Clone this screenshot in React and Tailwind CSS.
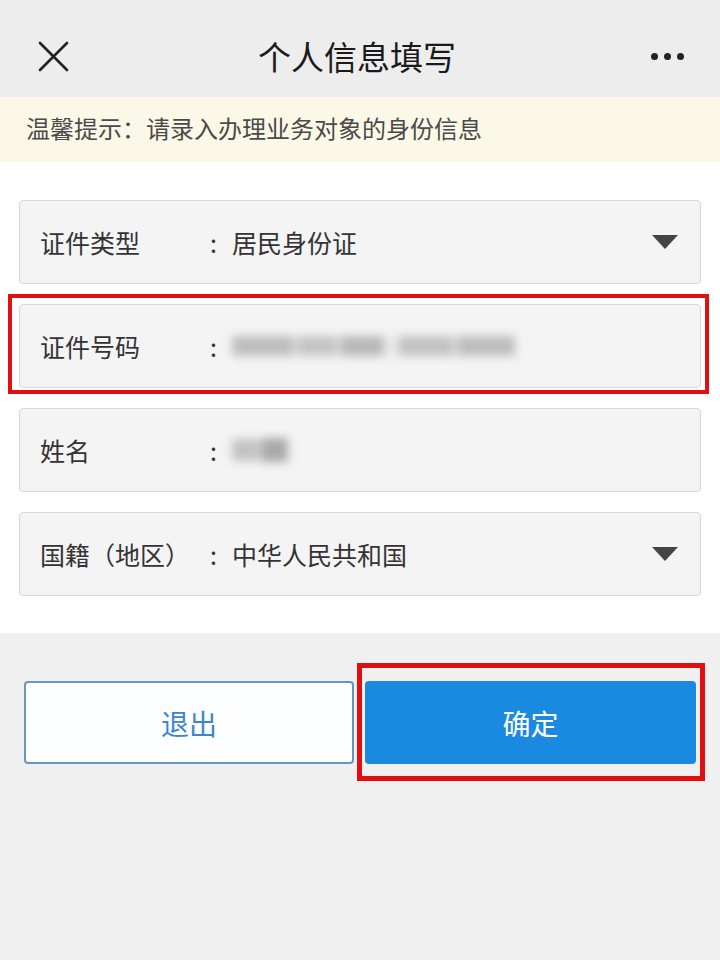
import React from "react";

const font = { fontFamily: '"Noto Sans CJK SC", "Noto Sans", sans-serif' };

function Field({ label, value, blur, dropdown }) {
  return (
    <div className="h-[84px] mx-[19px] flex items-center rounded-[4px] border border-[#d6d6d6] bg-[#f4f4f4] pl-[20px] pr-[20px]">
      <span className="w-[170px] text-[25px] text-[#333] leading-none">{label}</span>
      <span className="w-[22px] text-[25px] text-[#333] leading-none">:</span>
      {value ? <span className="text-[25px] text-[#333] leading-none">{value}</span> : blur}
      <div className="flex-1" />
      {dropdown && (
        <svg width="26" height="14" viewBox="0 0 26 14" className="mr-[2px]">
          <polygon points="0,0 26,0 13,14" fill="#444" />
        </svg>
      )}
    </div>
  );
}

export default function App() {
  const idBlur = (
    <div className="flex items-center gap-[3px] blur-[5px]">
      <div className="w-[62px] h-[20px] bg-[#bdbdbd]" />
      <div className="w-[40px] h-[20px] bg-[#c4c4c4]" />
      <div className="w-[44px] h-[20px] bg-[#b8b8b8]" />
      <div className="w-[8px] h-[20px] bg-[#e6e6e6]" />
      <div className="w-[56px] h-[20px] bg-[#c2c2c2]" />
      <div className="w-[58px] h-[20px] bg-[#bdbdbd]" />
    </div>
  );
  const nameBlur = (
    <div className="flex items-center gap-[2px] blur-[5px]">
      <div className="w-[27px] h-[22px] bg-[#c2c2c2]" />
      <div className="w-[27px] h-[24px] bg-[#a9a9a9]" />
    </div>
  );
  return (
    <div className="w-[720px] h-[960px] bg-[#f0f0f0] flex flex-col" style={font}>
      {/* Header */}
      <div className="h-[97px] bg-[#ededed] flex items-center px-[38px] pt-[16px]">
        <svg width="31" height="31" viewBox="0 0 31 31">
          <path d="M2 2 L29 29 M29 2 L2 29" stroke="#222" strokeWidth="2.6" strokeLinecap="round" />
        </svg>
        <div className="flex-1 text-center text-[33px] text-[#1a1a1a] font-normal leading-none ml-[-6px]">个人信息填写</div>
        <div className="flex gap-[6px] items-center mr-[-2px]">
          <span className="w-[7px] h-[7px] rounded-full bg-[#222]" />
          <span className="w-[7px] h-[7px] rounded-full bg-[#222]" />
          <span className="w-[7px] h-[7px] rounded-full bg-[#222]" />
        </div>
      </div>
      {/* Notice */}
      <div className="h-[65px] bg-[#fcf8e7] flex items-center px-[26px] pb-[4px]">
        <span className="text-[24px] text-[#4a4a4a] leading-none">温馨提示：请录入办理业务对象的身份信息</span>
      </div>
      {/* Form */}
      <div className="bg-white pt-[38px] pb-[37px] flex flex-col gap-[20px]">
        <Field label="证件类型" value="居民身份证" dropdown />
        <div className="relative">
          <Field label="证件号码" blur={idBlur} />
          <div className="absolute left-[8px] right-[11px] top-[-10px] bottom-[-6px] border-[4px] border-[#e01010] pointer-events-none" />
        </div>
        <Field label="姓名" blur={nameBlur} />
        <Field label="国籍（地区）" value="中华人民共和国" dropdown />
      </div>
      {/* Buttons */}
      <div className="flex gap-[11px] px-[24px] pt-[48px]">
        <button className="w-[330px] h-[83px] rounded-[4px] border-[2px] border-[#6896bd] bg-[#fdfeff] text-[28px] text-[#3d86c9] leading-none">退出</button>
        <div className="relative">
          <button className="w-[331px] h-[83px] rounded-[4px] bg-[#1a89e0] text-[28px] text-white leading-none">确定</button>
          <div className="absolute left-[-8px] right-[-9px] top-[-18px] bottom-[-17px] border-[5px] border-[#e01010] pointer-events-none" />
        </div>
      </div>
    </div>
  );
}
